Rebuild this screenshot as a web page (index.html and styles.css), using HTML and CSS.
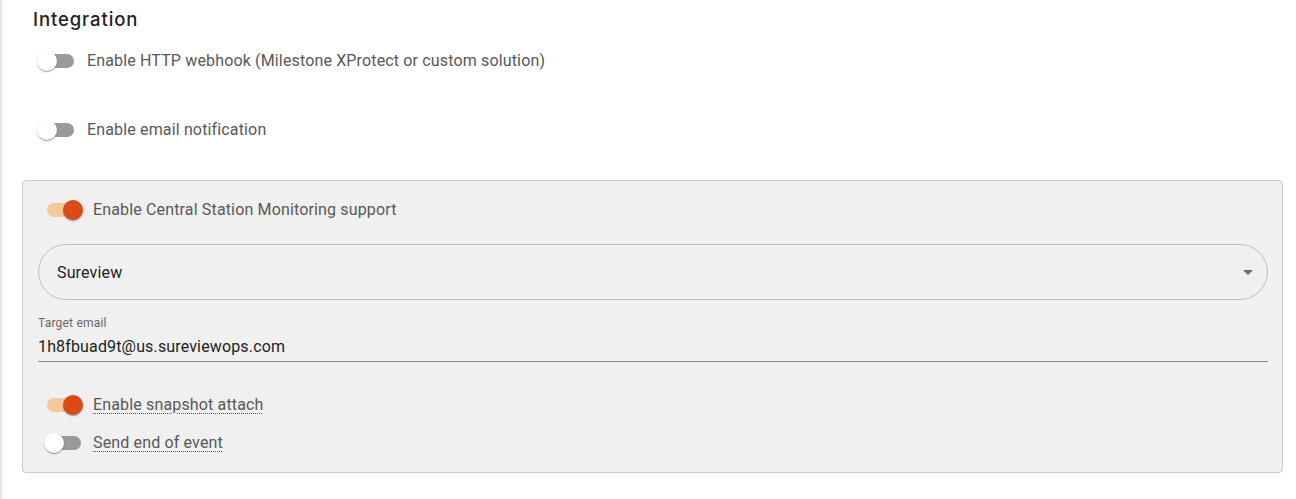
FILE: index.html
```html
<!DOCTYPE html>
<html>
<head>
<meta charset="utf-8">
<link rel="stylesheet" href="styles.css">
</head>
<body>
<div class="page">
  <h2 class="title">Integration</h2>
  <div class="row row-top">
    <span class="switch off"><span class="track"></span><span class="thumb"></span></span>
    <span class="label">Enable HTTP webhook (Milestone XProtect or custom solution)</span>
  </div>
  <div class="row row-second">
    <span class="switch off"><span class="track"></span><span class="thumb"></span></span>
    <span class="label">Enable email notification</span>
  </div>
  <div class="panel">
    <div class="row panel-row">
      <span class="switch on"><span class="track"></span><span class="thumb"></span></span>
      <span class="label">Enable Central Station Monitoring support</span>
    </div>
    <div class="select">
      <span class="select-value">Sureview</span>
      <span class="arrow"></span>
    </div>
    <div class="field">
      <div class="field-label">Target email</div>
      <div class="field-value">1h8fbuad9t@us.sureviewops.com</div>
    </div>
    <div class="row sub-row first-sub">
      <span class="switch on"><span class="track"></span><span class="thumb"></span></span>
      <span class="label dotted">Enable snapshot attach</span>
    </div>
    <div class="row sub-row second-sub">
      <span class="switch off"><span class="track"></span><span class="thumb"></span></span>
      <span class="label dotted">Send end of event</span>
    </div>
  </div>
</div>
</body>
</html>
```
FILE: styles.css
```css
html, body {
  margin: 0;
  padding: 0;
  background: #ffffff;
}
body {
  font-family: Roboto, "Liberation Sans", sans-serif;
  letter-spacing: 0.15px;
}
.page {
  border-left: 2px solid #e6e6e6;
  min-height: 499px;
  box-sizing: border-box;
  padding-right: 13px;
  display: flex;
  flex-direction: column;
}
.title {
  margin: 0;
  height: 38px;
  line-height: 38px;
  padding-left: 31px;
  font-family: Inter, "Liberation Sans", sans-serif;
  font-weight: 500;
  font-size: 18.5px;
  color: #222222;
  letter-spacing: 0.9px;
}
.row {
  display: flex;
  align-items: center;
}
.row-top {
  height: 46px;
  padding-left: 38px;
}
.row-second {
  height: 46px;
  margin-top: 23px;
  padding-left: 38px;
}
.switch {
  position: relative;
  width: 34px;
  height: 14px;
  flex: none;
  margin-right: 13px;
}
.track {
  display: block;
  width: 34px;
  height: 14px;
  border-radius: 7px;
  background: #9a9a9a;
}
.thumb {
  position: absolute;
  top: -3px;
  left: -3px;
  width: 20px;
  height: 20px;
  border-radius: 50%;
  background: #ffffff;
  box-shadow: 0 2px 1px -1px rgba(0,0,0,0.2), 0 1px 1px 0 rgba(0,0,0,0.14), 0 1px 3px 0 rgba(0,0,0,0.12);
}
.switch.on .track {
  background: #f5c99c;
}
.switch.on .thumb {
  left: auto;
  right: -2px;
  background: #dc4a17;
}
.label {
  font-size: 16px;
  color: #585858;
  line-height: 20px;
}
.label.dotted {
  text-decoration: underline dotted #555555;
  text-underline-offset: 3px;
  text-decoration-thickness: 1px;
}
.panel {
  margin-top: 27px;
  margin-left: 20px;
  border: 1px solid #cbcbcb;
  border-radius: 4px;
  background: #f0f0f0;
  padding: 8px 14px 14px 15px;
  display: flex;
  flex-direction: column;
}
.panel-row {
  height: 42px;
  padding-left: 9px;
}
.panel-row .switch {
  margin-right: 12px;
}
.select {
  margin-top: 13px;
  height: 56px;
  box-sizing: border-box;
  border: 1px solid #bdbdbd;
  border-radius: 28px;
  display: flex;
  align-items: center;
  justify-content: space-between;
  padding: 0 14px 0 18px;
}
.select-value {
  font-size: 16px;
  color: #222222;
}
.arrow {
  width: 0;
  height: 0;
  border-left: 5px solid transparent;
  border-right: 5px solid transparent;
  border-top: 5px solid #707070;
}
.field {
  margin-top: 15px;
  border-bottom: 1px solid #8a8a8a;
  padding-bottom: 2px;
}
.field-label {
  font-size: 12px;
  line-height: 16px;
  color: #666666;
  letter-spacing: 0.2px;
}
.field-value {
  margin-top: 4px;
  font-size: 16px;
  line-height: 24px;
  color: #1e1e1e;
}
.sub-row {
  height: 30px;
  padding-left: 9px;
}
.sub-row .switch {
  margin-right: 12px;
}
.first-sub {
  margin-top: 28px;
}
.second-sub {
  margin-top: 8px;
}
```
